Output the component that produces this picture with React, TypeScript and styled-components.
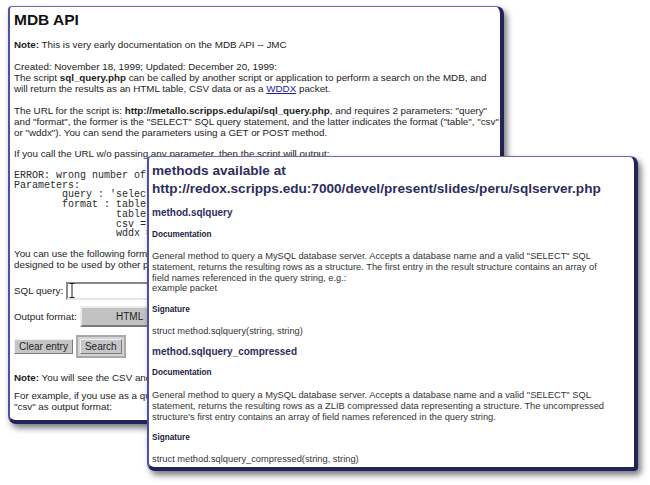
import React from 'react';
import styled, { createGlobalStyle } from 'styled-components';

const GlobalStyle = createGlobalStyle`
  html, body {
    margin: 0;
    padding: 0;
    background: #ffffff;
  }
`;

// Desktop canvas: the two browser windows sit on it at their own coordinates
const Desktop = styled.div`
  position: relative;
  width: 650px;
  height: 485px;
  overflow: hidden;
  background: #ffffff;
  font-family: "Liberation Sans", Arial, sans-serif;
`;

const Window = styled.div<{ $x: number; $y: number; $w: number; $h: number; $z: number }>`
  position: absolute;
  left: ${p => p.$x}px;
  top: ${p => p.$y}px;
  width: ${p => p.$w}px;
  height: ${p => p.$h}px;
  z-index: ${p => p.$z};
  box-sizing: border-box;
  background: #ffffff;
  border-style: solid;
  border-color: #6a6ab6 #23235c #23235c #4f4fa4;
  border-width: 1px 4px 4px 2px;
  border-radius: 4px 8px 4px 8px;
  box-shadow: 3px 4px 6px rgba(30, 30, 40, 0.6);
  overflow: hidden;
`;

const BackBody = styled.div`
  padding: 3px 0 0 4px;
  color: #1c1c1c;
  font-size: 9.8px;
  line-height: 11px;
  white-space: nowrap;
`;

const PageTitle = styled.h1`
  margin: 0;
  font-size: 15.5px;
  line-height: 20px;
  font-weight: bold;
  color: #111;
`;

const Para = styled.p<{ $gap?: number }>`
  margin: ${p => (p.$gap ?? 11)}px 0 0;
`;

const Link = styled.span`
  color: #1a1aa8;
  text-decoration: underline;
`;

const Pre = styled.pre`
  margin: 12px 0 0;
  font-family: "Liberation Mono", "Courier New", monospace;
  font-size: 10px;
  line-height: 9.7px;
  color: #2a2a2a;
`;

const FormRow = styled.div<{ $gap: number }>`
  display: flex;
  align-items: center;
  gap: 3px;
  margin-top: ${p => p.$gap}px;
`;

const TextInput = styled.div`
  width: 150px;
  height: 18px;
  box-sizing: border-box;
  background: #fff;
  border-style: solid;
  border-width: 2px;
  border-color: #8a8a8a #e6e6e6 #e6e6e6 #8a8a8a;
  display: flex;
  align-items: center;
  padding-left: 1px;
`;

const SelectBox = styled.div`
  width: 100px;
  height: 21px;
  box-sizing: border-box;
  background: #c2c2c2;
  border-style: solid;
  border-width: 2px;
  border-color: #ececec #7a7a7a #7a7a7a #ececec;
  display: flex;
  align-items: center;
  justify-content: center;
  color: #222;
  font-size: 10px;
`;

const Button = styled.div`
  height: 15px;
  box-sizing: border-box;
  padding: 0 4px;
  background: #c6c6c6;
  border-style: solid;
  border-width: 1px;
  border-color: #f0f0f0 #7a7a7a #7a7a7a #f0f0f0;
  display: flex;
  align-items: center;
  color: #222;
  font-size: 10px;
`;

const DefaultFrame = styled.div`
  padding: 2px 2px;
  border: 2px solid #a9a9a9;
  background: #d4d4d4;
`;

const FrontBody = styled.div`
  padding: 5px 0 0 3px;
  white-space: nowrap;
  color: #333;
  font-size: 9.3px;
  line-height: 10.8px;
`;

const FrontTitle = styled.h2`
  margin: 0;
  font-size: 13.6px;
  line-height: 18px;
  font-weight: bold;
  color: #2d2d5c;
`;

const MethodName = styled.h3`
  margin: 9px 0 0;
  font-size: 10px;
  line-height: 12px;
  font-weight: bold;
  color: #2d2d5c;
`;

const SubHead = styled.h4`
  margin: 10.5px 0 0;
  font-size: 8.2px;
  line-height: 10px;
  font-weight: bold;
  color: #1c1c3c;
`;

const Text = styled.p`
  margin: 11.5px 0 0;
`;

const IBeam = () => (
  <svg width="6" height="15" viewBox="0 0 6 15">
    <path d="M0.5 0.5 H5.5 M3 0.5 V14.5 M0.5 14.5 H5.5" stroke="#222" strokeWidth="1" fill="none" />
  </svg>
);

const lines = (items: React.ReactNode[]) =>
  items.map((t, i) => (
    <React.Fragment key={i}>
      {i > 0 && <br />}
      {t}
    </React.Fragment>
  ));

const methods = [
  {
    name: 'method.sqlquery',
    doc: [
      'General method to query a MySQL database server. Accepts a database name and a valid "SELECT" SQL',
      'statement, returns the resulting rows as a structure. The first entry in the result structure contains an array of',
      'field names referenced in the query string, e.g.:',
      'example packet',
    ],
    sig: 'struct method.sqlquery(string, string)',
  },
  {
    name: 'method.sqlquery_compressed',
    doc: [
      'General method to query a MySQL database server. Accepts a database name and a valid "SELECT" SQL',
      'statement, returns the resulting rows as a ZLIB compressed data representing a structure. The uncompressed',
      "structure's first entry contains an array of field names referenced in the query string.",
    ],
    sig: 'struct method.sqlquery_compressed(string, string)',
  },
];

const errorOutput = `ERROR: wrong number of parameters
Parameters:
        query : 'select statement'
        format : table, csv or wddx
                 table = HTML table
                 csv = comma separated values
                 wddx = WDDX packet`;

const App: React.FC = () => {
  return (
    <Desktop>
      <GlobalStyle />

      <Window $x={8} $y={6} $w={496} $h={418} $z={1}>
        <BackBody>
          <PageTitle>MDB API</PageTitle>
          <Para $gap={9}>
            <b>Note:</b> This is very early documentation on the MDB API -- JMC
          </Para>
          <Para>
            {lines([
              'Created: November 18, 1999; Updated: December 20, 1999:',
              <>The script <b>sql_query.php</b> can be called by another script or application to perform a search on the MDB, and</>,
              <>will return the results as an HTML table, CSV data or as a <Link>WDDX</Link> packet.</>,
            ])}
          </Para>
          <Para>
            {lines([
              <>The URL for the script is: <b>http://metallo.scripps.edu/api/sql_query.php</b>, and requires 2 parameters: "query"</>,
              'and "format", the former is the "SELECT" SQL query statement, and the latter indicates the format ("table", "csv"',
              'or "wddx"). You can send the parameters using a GET or POST method.',
            ])}
          </Para>
          <Para $gap={10}>If you call the URL w/o passing any parameter, then the script will output:</Para>
          <Pre>{errorOutput}</Pre>
          <Para $gap={9}>
            {lines([
              'You can use the following form to test the script. Note that the script was',
              'designed to be used by other programs, not by people.',
            ])}
          </Para>
          <FormRow $gap={12}>
            <span>SQL query:</span>
            <TextInput>
              <IBeam />
            </TextInput>
          </FormRow>
          <FormRow $gap={6}>
            <span>Output format:</span>
            <SelectBox>HTML</SelectBox>
          </FormRow>
          <FormRow $gap={8}>
            <Button>Clear entry</Button>
            <DefaultFrame>
              <Button>Search</Button>
            </DefaultFrame>
          </FormRow>
          <Para $gap={14}>
            <b>Note:</b> You will see the CSV and WDDX output as plain text in the browser.
          </Para>
          <Para $gap={7}>
            {lines([
              'For example, if you use as a query "select * from protein limit 2" and',
              '"csv" as output format:',
            ])}
          </Para>
        </BackBody>
      </Window>

      <Window $x={147} $y={156} $w={491} $h={315} $z={2}>
        <FrontBody>
          <FrontTitle>
            {lines(['methods available at', 'http://redox.scripps.edu:7000/devel/present/slides/peru/sqlserver.php'])}
          </FrontTitle>
          {methods.map(m => (
            <React.Fragment key={m.name}>
              <MethodName>{m.name}</MethodName>
              <SubHead>Documentation</SubHead>
              <Text>{lines(m.doc)}</Text>
              <SubHead>Signature</SubHead>
              <Text>{m.sig}</Text>
            </React.Fragment>
          ))}
        </FrontBody>
      </Window>
    </Desktop>
  );
};

export default App;
